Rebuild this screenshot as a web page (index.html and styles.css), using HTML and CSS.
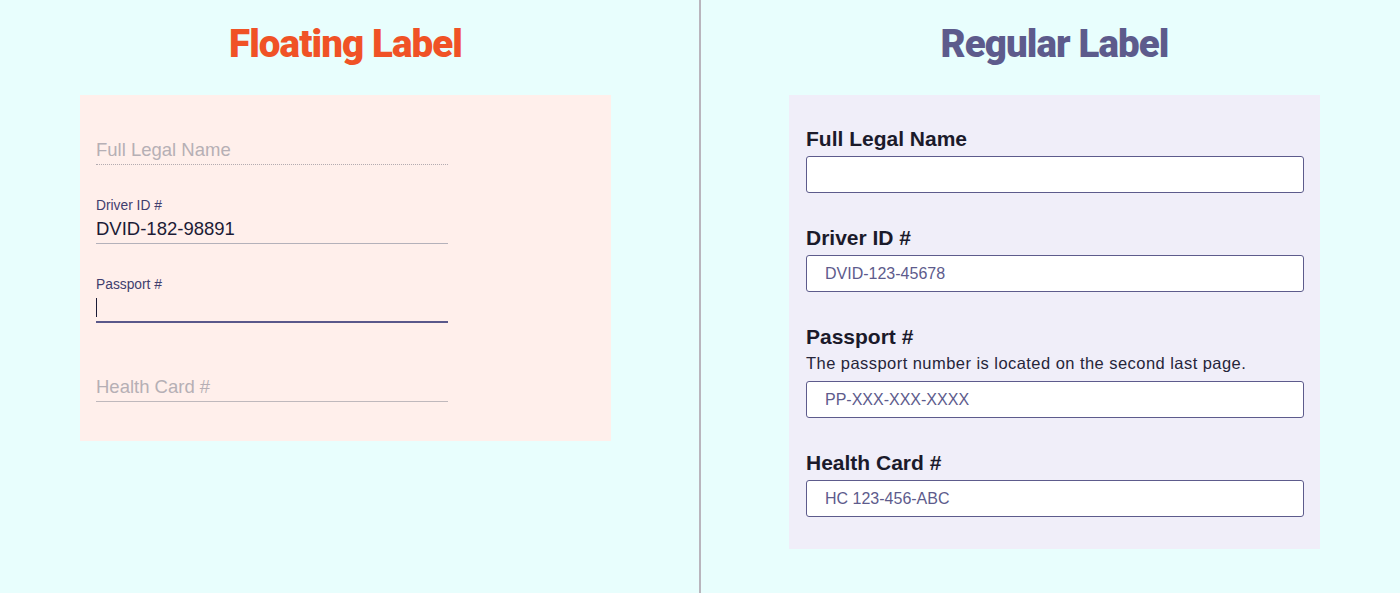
FILE: index.html
```html
<!DOCTYPE html>
<html lang="en">
<head>
<meta charset="utf-8">
<title>Floating Label vs Regular Label</title>
<link rel="stylesheet" href="styles.css">
</head>
<body>
<main class="page">
  <section class="col col-left">
    <h1 class="title title-float">Floating Label</h1>
    <form class="panel panel-float">
      <div class="ffield ffield-empty ffield-dotted">
        <label class="ffield-label" for="f-name">Full Legal Name</label>
        <input class="ffield-input" id="f-name" type="text">
      </div>
      <div class="ffield">
        <label class="ffield-label" for="f-driver">Driver ID #</label>
        <input class="ffield-input" id="f-driver" type="text" value="DVID-182-98891">
      </div>
      <div class="ffield ffield-focus">
        <label class="ffield-label" for="f-passport">Passport #</label>
        <div class="ffield-wrap">
          <input class="ffield-input" id="f-passport" type="text">
          <span class="caret"></span>
        </div>
      </div>
      <div class="ffield ffield-empty">
        <label class="ffield-label" for="f-health">Health Card #</label>
        <input class="ffield-input" id="f-health" type="text">
      </div>
    </form>
  </section>

  <div class="divider"></div>

  <section class="col col-right">
    <h1 class="title title-regular">Regular Label</h1>
    <form class="panel panel-regular">
      <div class="rfield">
        <label class="rfield-label" for="r-name">Full Legal Name</label>
        <input class="rfield-input" id="r-name" type="text">
      </div>
      <div class="rfield">
        <label class="rfield-label" for="r-driver">Driver ID #</label>
        <input class="rfield-input" id="r-driver" type="text" placeholder="DVID-123-45678">
      </div>
      <div class="rfield">
        <label class="rfield-label" for="r-passport">Passport #</label>
        <p class="rfield-help">The passport number is located on the second last page.</p>
        <input class="rfield-input" id="r-passport" type="text" placeholder="PP-XXX-XXX-XXXX">
      </div>
      <div class="rfield">
        <label class="rfield-label" for="r-health">Health Card #</label>
        <input class="rfield-input" id="r-health" type="text" placeholder="HC 123-456-ABC">
      </div>
    </form>
  </section>
</main>
</body>
</html>
```

FILE: styles.css
```css
* {
  box-sizing: border-box;
}

html, body {
  margin: 0;
  padding: 0;
  height: 100%;
}

body {
  background: #e8fefd;
  font-family: "Liberation Sans", Arial, sans-serif;
  overflow: hidden;
}

.page {
  display: grid;
  grid-template-columns: 1fr 2px 1fr;
  height: 593px;
}

.divider {
  background: #b9b5bd;
}

.col {
  display: flex;
  flex-direction: column;
  align-items: flex-start;
}

.col-left {
  padding-left: 80px;
}

.col-right {
  padding-left: 88px;
}

.title {
  width: 531px;
  margin: 0;
  padding-top: 21px;
  height: 95px;
  text-align: center;
  font-family: Roboto, "Liberation Sans", sans-serif;
  font-weight: 900;
  font-size: 38.5px;
  line-height: 46px;
  letter-spacing: -0.9px;
}

.title-float {
  color: #f05226;
}

.title-regular {
  color: #5d5b8c;
}

.panel {
  width: 531px;
  margin: 0;
}

/* Floating label panel */
.panel-float {
  background: #ffefeb;
  padding: 24px 16px 39px;
  display: flex;
  flex-direction: column;
  gap: 33px;
}

.ffield {
  position: relative;
  width: 352px;
  display: flex;
  flex-direction: column;
}

.ffield-label {
  display: block;
  height: 16px;
  margin-bottom: 4px;
  font-size: 13.8px;
  line-height: 16px;
  color: #3f3e6e;
}

.ffield-input {
  display: block;
  width: 100%;
  height: 26px;
  margin: 0;
  padding: 0 0 4px 0;
  border: 0;
  border-bottom: 1px solid #b4b1ba;
  background: transparent;
  font-family: "Liberation Sans", Arial, sans-serif;
  font-size: 18.5px;
  color: #1c1b36;
  outline: none;
}

.ffield-empty {
  padding-top: 20px;
}

.ffield-empty .ffield-label {
  position: absolute;
  left: 0;
  top: 20px;
  height: 22px;
  margin: 0;
  font-size: 18.5px;
  line-height: 22px;
  color: #b6afb5;
}

.ffield-empty .ffield-input {
  border-bottom-color: #bfb8bc;
}

.ffield-dotted .ffield-input {
  border-bottom: 1px dotted #b3abb0;
}

.ffield-wrap {
  position: relative;
}

.ffield-focus .ffield-input {
  border-bottom: 2px solid #5a588a;
}

.caret {
  position: absolute;
  left: 0;
  top: 1px;
  width: 1px;
  height: 19px;
  background: #1c1b36;
}

/* Regular label panel */
.panel-regular {
  background: #f0eef9;
  padding: 32px 16px 32px 17px;
  display: flex;
  flex-direction: column;
  gap: 33px;
}

.rfield {
  display: flex;
  flex-direction: column;
}

.rfield-label {
  display: block;
  font-weight: 700;
  font-size: 21px;
  line-height: 24px;
  margin-bottom: 5px;
  color: #1b1a2b;
}

.rfield-help {
  margin: 0 0 9px;
  font-size: 16.5px;
  line-height: 18px;
  letter-spacing: 0.45px;
  color: #26253a;
}

.rfield-input {
  display: block;
  width: 498px;
  height: 37px;
  margin: 0;
  padding: 0 18px;
  border: 1px solid #5d5b8c;
  border-radius: 3px;
  background: #ffffff;
  font-family: "Liberation Sans", Arial, sans-serif;
  font-size: 16px;
  color: #5d5b8c;
  outline: none;
}

.rfield-input::placeholder {
  color: #5d5b8c;
  opacity: 1;
}
```
